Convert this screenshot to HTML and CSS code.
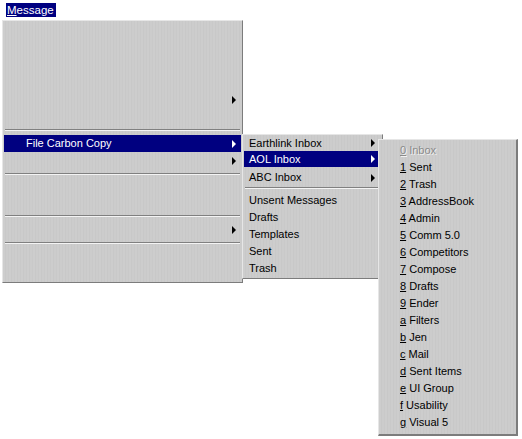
FILE: index.html
```html
<!DOCTYPE html>
<html>
<head>
<meta charset="utf-8">
<link rel="stylesheet" href="styles.css">
</head>
<body>
<div class="screen">
  <div class="menubar"><span class="title"><u>M</u>essage</span></div>

  <div class="menu main">
    <div class="blank h70"></div>
    <div class="row"><span class="label"></span><span class="arrow"></span></div>
    <div class="blank h20"></div>
    <div class="blank h1"></div>
    <div class="sep"></div>
    <div class="blank h4"></div>
    <div class="row hl"><span class="label">File Carbon Copy</span><span class="arrow"></span></div>
    <div class="row"><span class="label"></span><span class="arrow"></span></div>
    <div class="blank h4"></div>
    <div class="sep"></div>
    <div class="blank h40"></div>
    <div class="sep"></div>
    <div class="blank h4"></div>
    <div class="row"><span class="label"></span><span class="arrow"></span></div>
    <div class="blank h4"></div>
    <div class="sep"></div>
  </div>

  <div class="menu sub1">
    <div class="row short"><span class="label">Earthlink Inbox</span><span class="arrow"></span></div>
    <div class="row short hl"><span class="label">AOL Inbox</span><span class="arrow"></span></div>
    <div class="blank h2"></div>
    <div class="row"><span class="label">ABC Inbox</span><span class="arrow"></span></div>
    <div class="blank h1"></div>
    <div class="sep"></div>
    <div class="blank h3"></div>
    <div class="row"><span class="label">Unsent Messages</span></div>
    <div class="row"><span class="label">Drafts</span></div>
    <div class="row"><span class="label">Templates</span></div>
    <div class="row"><span class="label">Sent</span></div>
    <div class="row"><span class="label">Trash</span></div>
  </div>

  <div class="menu sub2">
    <div class="blank h2"></div>
    <div class="row disabled"><span class="label"><u>0</u> Inbox</span></div>
    <div class="row"><span class="label"><u>1</u> Sent</span></div>
    <div class="row"><span class="label"><u>2</u> Trash</span></div>
    <div class="row"><span class="label"><u>3</u> AddressBook</span></div>
    <div class="row"><span class="label"><u>4</u> Admin</span></div>
    <div class="row"><span class="label"><u>5</u> Comm 5.0</span></div>
    <div class="row"><span class="label"><u>6</u> Competitors</span></div>
    <div class="row"><span class="label"><u>7</u> Compose</span></div>
    <div class="row"><span class="label"><u>8</u> Drafts</span></div>
    <div class="row"><span class="label"><u>9</u> Ender</span></div>
    <div class="row"><span class="label"><u>a</u> Filters</span></div>
    <div class="row"><span class="label"><u>b</u> Jen</span></div>
    <div class="row"><span class="label"><u>c</u> Mail</span></div>
    <div class="row"><span class="label"><u>d</u> Sent Items</span></div>
    <div class="row"><span class="label"><u>e</u> UI Group</span></div>
    <div class="row"><span class="label"><u>f</u> Usability</span></div>
    <div class="row"><span class="label"><u>g</u> Visual 5</span></div>
  </div>
</div>
</body>
</html>
```

FILE: styles.css
```css
html, body {
  margin: 0;
  padding: 0;
  background: #ffffff;
}

.screen {
  position: relative;
  width: 522px;
  height: 439px;
  font-family: "Liberation Sans", Arial, sans-serif;
  font-size: 11px;
  color: #000;
}

.menubar {
  height: 20px;
  padding: 3px 0 0 6px;
  box-sizing: border-box;
}

.title {
  display: inline-block;
  vertical-align: top;
  width: 50px;
  height: 14px;
  line-height: 14px;
  padding-left: 1px;
  box-sizing: border-box;
  background: #000080;
  color: #fff;
  font-size: 11.5px;
}

.title u {
  text-underline-offset: 1px;
}

.menu {
  box-sizing: border-box;
  padding: 0 1px;
  background-color: #cbcbcb;
  background-image: repeating-linear-gradient(90deg, #cdcdcd 0 2px, #c8c8c8 2px 3px, #cccccc 3px 5px, #c9c9c9 5px 6px);
  border-top: 1px solid #e6e6e6;
  border-left: 1px solid #e6e6e6;
  border-right: 1px solid #7c7c7c;
  border-bottom: 1px solid #7c7c7c;
}

.main {
  margin-left: 2px;
  width: 241px;
  height: 263px;
}

.sub1 {
  position: absolute;
  left: 242px;
  top: 134px;
  width: 141px;
  height: 145px;
}

.sub2 {
  position: absolute;
  left: 378px;
  top: 139px;
  width: 140px;
  height: 297px;
  border-right-width: 2px;
  border-bottom-width: 2px;
}

.blank { height: 0; }
.h1 { height: 1px; }
.h2 { height: 2px; }
.h3 { height: 3px; }
.h4 { height: 4px; }
.h20 { height: 20px; }
.h40 { height: 40px; }
.h70 { height: 70px; }

.sep {
  height: 0;
  margin: 0 1px;
  border-top: 1px solid #808080;
  border-bottom: 1px solid #f4f4f4;
}

.row {
  display: flex;
  align-items: center;
  justify-content: space-between;
  height: 17px;
  line-height: 17px;
  white-space: nowrap;
}

.row.short {
  height: 16px;
  line-height: 16px;
}

.main .row {
  padding: 0 5px 0 22px;
}

.sub1 .row {
  padding: 0 6px 0 5px;
}

.sub2 .row {
  padding: 0 0 0 20px;
}

.row u {
  text-underline-offset: 1px;
}

.hl {
  background: #000080;
  color: #fff;
}

.disabled {
  color: #8a8a8a;
  text-shadow: 1px 1px 0 #f2f2f2;
}

.arrow {
  width: 0;
  height: 0;
  border-left: 4px solid currentColor;
  border-top: 4px solid transparent;
  border-bottom: 4px solid transparent;
}
```
